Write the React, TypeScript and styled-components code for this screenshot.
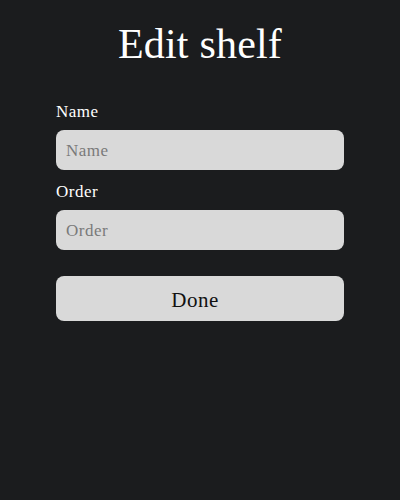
import React from "react";
import styled, { createGlobalStyle } from "styled-components";

const GlobalStyle = createGlobalStyle`
  html, body {
    margin: 0;
    padding: 0;
    background: #1b1c1e;
  }
  body {
    font-family: "Liberation Serif", serif;
  }
`;

const Page = styled.div`
  width: 400px;
  height: 500px;
  display: flex;
  flex-direction: column;
  align-items: center;
  color: #ffffff;
`;

const Title = styled.h1`
  margin: 20px 0 0 0;
  font-size: 42px;
  font-weight: 400;
  line-height: 48px;
  letter-spacing: 0.2px;
`;

const Form = styled.form`
  width: 288px;
  margin-top: 34px;
  display: flex;
  flex-direction: column;
`;

const Label = styled.label`
  font-size: 17px;
  line-height: 20px;
  letter-spacing: 0.5px;
  margin-bottom: 8px;
`;

const Input = styled.input`
  box-sizing: border-box;
  height: 40px;
  width: 100%;
  border: none;
  border-radius: 8px;
  background: #d9d9d9;
  padding: 1px 10px 0 10px;
  font-family: "Liberation Serif", serif;
  font-size: 17px;
  letter-spacing: 0.5px;
  color: #111;
  margin-bottom: 12px;
  outline: none;

  &::placeholder {
    color: #7a7a7a;
  }
`;

const DoneButton = styled.button`
  box-sizing: border-box;
  margin-top: 14px;
  height: 45px;
  width: 100%;
  border: none;
  border-radius: 8px;
  background: #d9d9d9;
  padding: 3px 10px 0 0;
  font-family: "Liberation Serif", serif;
  font-size: 21px;
  letter-spacing: 0.5px;
  color: #111;
`;

export default function App() {
  return (
    <>
      <GlobalStyle />
      <Page>
        <Title>Edit shelf</Title>
        <Form onSubmit={(e) => e.preventDefault()}>
          <Label>Name</Label>
          <Input placeholder="Name" />
          <Label>Order</Label>
          <Input placeholder="Order" />
          <DoneButton type="submit">Done</DoneButton>
        </Form>
      </Page>
    </>
  );
}
